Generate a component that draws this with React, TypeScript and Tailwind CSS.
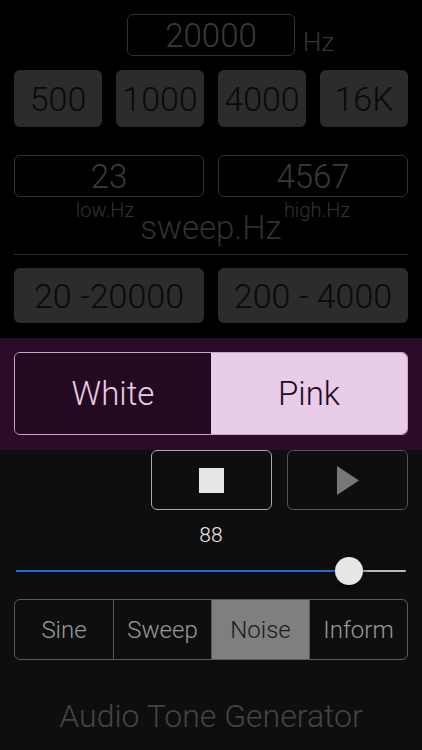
import React from "react";

const presets = ["500", "1000", "4000", "16K"];
const modes = ["Sine", "Sweep", "Noise", "Inform"];

const App = () => {
  const volume = 88;

  return (
    <div
      className="flex h-[750px] w-[422px] flex-col overflow-hidden bg-[#0e0e0e] font-light"
      style={{ fontFamily: "Roboto, 'Liberation Sans', sans-serif" }}
    >
      {/* frequency section */}
      <div className="flex flex-col bg-black px-[14px] pt-[14px] pb-[15px]">
        <div className="grid grid-cols-[1fr_168px_1fr] items-end">
          <div />
          <div className="flex h-[42px] items-center justify-center rounded-md border border-[#303030] text-[33px] leading-none text-[#3a3a3a]">
            20000
          </div>
          <span className="ml-2 mb-[1px] text-[26px] leading-none text-[#363636]">
            Hz
          </span>
        </div>

        <div className="mt-[14px] grid grid-cols-4 gap-[14px]">
          {presets.map((p) => (
            <div
              key={p}
              className="flex h-[57px] items-center justify-center rounded-md bg-[#2c2c2c] text-[34px] leading-none text-[#0a0a0a]"
            >
              {p}
            </div>
          ))}
        </div>

        <div className="mt-[28px] grid grid-cols-2 gap-[14px]">
          <div className="flex h-[42px] items-center justify-center rounded-md border border-[#303030] text-[33px] leading-none text-[#3a3a3a]">
            23
          </div>
          <div className="flex h-[42px] items-center justify-center rounded-md border border-[#303030] text-[33px] leading-none text-[#3a3a3a]">
            4567
          </div>
        </div>

        <div className="mt-[2px] grid grid-cols-2 gap-[14px] text-[20px] leading-[22px] text-[#323232]">
          <span className="pr-2 text-center">low.Hz</span>
          <span className="pl-2 text-center">high.Hz</span>
        </div>
        <div className="-mt-[11px] text-center text-[33px] leading-[36px] text-[#303030]">
          sweep.Hz
        </div>

        <div className="mt-[8px] h-px bg-[#2c2c2c]" />

        <div className="mt-[13px] grid grid-cols-2 gap-[14px]">
          <div className="flex h-[55px] items-center justify-center rounded-md bg-[#2c2c2c] text-[34px] leading-none text-[#0a0a0a]">
            20 -20000
          </div>
          <div className="flex h-[55px] items-center justify-center rounded-md bg-[#2c2c2c] text-[34px] leading-none text-[#0a0a0a]">
            200 - 4000
          </div>
        </div>
      </div>

      {/* noise colour */}
      <div className="bg-[#2a0c28] px-[14px] pt-[14px] pb-[15px]">
        <div className="grid h-[83px] grid-cols-2 overflow-hidden rounded-md border border-[#c9a6c6]">
          <div className="flex items-center justify-center bg-[#230a21] text-[33px] text-[#e8cce8]">
            White
          </div>
          <div className="flex items-center justify-center bg-[#e8cce8] text-[33px] text-[#230a21]">
            Pink
          </div>
        </div>
      </div>

      {/* transport */}
      <div className="flex justify-end gap-[15px] px-[14px]">
        <button className="flex h-[60px] w-[121px] items-center justify-center rounded-md border border-[#a8a8a8] bg-[#0e0e0e]">
          <span className="h-[25px] w-[25px] bg-[#e6e6e6]" />
        </button>
        <button className="flex h-[60px] w-[121px] items-center justify-center rounded-md border border-[#555] bg-[#0e0e0e]">
          <svg width="22" height="29" viewBox="0 0 22 29">
            <polygon points="0,0 22,14.5 0,29" fill="#777" />
          </svg>
        </button>
      </div>

      <div className="mt-[13px] text-center text-[21px] leading-6 text-[#e8e8e8]">
        {volume}
      </div>

      {/* volume slider */}
      <div className="relative mx-[16px] mt-[9px] h-[30px]">
        <div className="absolute top-[14px] right-0 left-0 h-[2px] rounded bg-[#b8b8b8]" />
        <div
          className="absolute top-[14px] left-0 h-[2px] rounded bg-[#1f6fd6]"
          style={{ width: `calc(14px + (100% - 28px) * ${volume / 100})` }}
        />
        <div
          className="absolute top-[1px] h-[28px] w-[28px] rounded-full bg-[#e6e6e6] shadow-[0_2px_6px_rgba(0,0,0,0.6)]"
          style={{ left: `calc((100% - 28px) * ${volume / 100})` }}
        />
      </div>

      {/* mode selector */}
      <div className="mx-[14px] mt-[13px] grid h-[61px] grid-cols-4 overflow-hidden rounded-md border border-[#5a5a5a]">
        {modes.map((m, i) => (
          <div
            key={m}
            className={`flex items-center justify-center text-[24px] ${
              m === "Noise"
                ? "bg-[#7f7f7f] text-[#1a1a1a]"
                : "text-[#9a9a9a]"
            } ${i > 0 ? "border-l border-[#5a5a5a]" : ""}`}
          >
            {m}
          </div>
        ))}
      </div>

      <div className="mt-[38px] text-center text-[32px] leading-9 text-[#444]">
        Audio Tone Generator
      </div>
    </div>
  );
};

export default App;
